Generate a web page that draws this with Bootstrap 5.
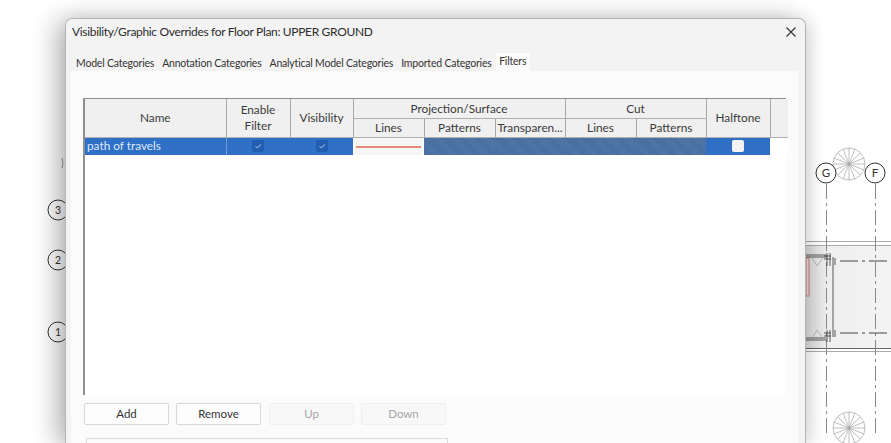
<!DOCTYPE html>
<html lang="en">
<head>
<meta charset="utf-8">
<title>Visibility/Graphic Overrides</title>
<link rel="stylesheet" href="https://cdn.jsdelivr.net/npm/bootstrap@5.3.0/dist/css/bootstrap.min.css">
<style>
html,body{height:443px;overflow:hidden;background:#fff}
body{font-family:"Lato","Noto Sans",sans-serif;font-size:12px;color:#333}
.sheet{position:absolute;left:0;top:0;width:891px;height:443px}
.vg-dialog{position:absolute;left:65px;top:18px;width:741px;height:425px;overflow:hidden;background:#f3f3f3;border:1px solid #b4b4b4;border-bottom:0;border-radius:7px 7px 0 0;padding:0 7px 0 5px}
.vg-shadow{position:absolute;left:65px;top:18px;width:741px;height:425px;border-radius:7px 7px 0 0;box-shadow:-8px 2px 26px rgba(0,0,0,.3),6px 2px 18px rgba(0,0,0,.08)}
.vg-title{height:26px;font-size:12px;letter-spacing:-.33px;color:#2c2c2c;padding-left:1px}
.vg-x{width:10px;height:10px;margin-right:2px}
.vg-tabs{height:18px;margin-top:8px;padding-left:1px}
.vg-tab{font-size:10.5px;letter-spacing:-.2px;padding:0 4px;line-height:20px;color:#333;white-space:nowrap}
.vg-tab.on{background:#fbfbfb;line-height:16px;height:18px;padding:0 3.5px}
.vg-panel{background:#fbfbfb;padding:27px 12px 0 12px;height:400px}
.vg-grid{height:297px;background:#fff;border-left:2px solid #8e8e8e;border-top:1px solid #8e8e8e}
.vg-table{table-layout:fixed;width:703px;border-collapse:collapse;font-size:11.8px;color:#3a3a3a;margin:0}
.vg-table th{background:#f0f0f0;font-weight:400;text-align:center;vertical-align:middle;padding:1px 0 0;border-right:1px solid #a8a8a8;border-bottom:1px solid #b0b0b0;line-height:16px}
.vg-table th.blank{border-right:0}
.row-top{height:19px}.row-sub{height:19px}
.vg-table td{height:18px;padding:0;background:#2f6fc6;color:#dfe9f8;border:0;vertical-align:middle;line-height:16px}
.vg-table td.nm{padding-left:2px;border-right:1px solid #6f9bd8}
.vg-table td.shade{background:repeating-linear-gradient(45deg,#446d9f 0 1px,#4f78a9 1px 2px)}
.vg-table td.none{background:#fff}
.vg-table td.ctr{text-align:center}
.ck{display:inline-block;width:12px;height:12px;border-radius:2px;background:#225eaf;vertical-align:-2px}
.ck svg{display:block}
.ck.off{background:#f2f2f2}
.vg-line{display:block;height:17px;background:#f6f6f6;margin:0 1px;padding-top:8px}
.vg-line i{display:block;height:2px;background:#e58a75;margin:0 2px}
.vg-btns{margin-top:8px;margin-left:1px}
.vg-btn{height:22px;width:85px;padding:0;background:#fdfdfd;border:1px solid #d8d8d8;border-radius:2px;color:#333;--bs-btn-font-size:11.5px;font-size:11.5px}
.vg-btn.off{background:#f8f8f8;border-color:#efefef;color:#a6a6a6}
.ml1{margin-left:7px}.ml2{margin-left:8px}
.vg-box{margin-top:13px;width:362px;height:30px;margin-left:3px;border:1px solid #dcdcdc;background:#fbfbfb}
</style>
</head>
<body>
<svg class="sheet" viewBox="0 0 891 443" fill="none" stroke="#555" stroke-width="1">
  <defs><linearGradient id="bandfill" x1="0" x2="1" y1="0" y2="0"><stop offset="0" stop-color="#d8d8d8"/><stop offset=".35" stop-color="#efefef"/><stop offset="1" stop-color="#f4f4f4"/></linearGradient></defs>
  <rect x="800" y="245" width="91" height="103" fill="url(#bandfill)" stroke="none"/>
  <path d="M800 241.5H891M800 245.5H891M800 351.5H891" stroke="#aaa"/>
  <path d="M800 348.5H891" stroke="#666"/>
  <path d="M826.5 184V433M875.5 184V433" stroke="#888" stroke-dasharray="15 4 3 4"/>
  <path d="M840 261H891M840 333H891" stroke="#444" stroke-dasharray="18 4 3 4"/>
  <g stroke="#a5a5a5" stroke-width=".7"><circle cx="849" cy="164" r="16" fill="#fff"/><path d="M849 148V180M833 164H865M838 153L860 175M838 175L860 153M843 149L855 179M843 179L855 149M834 158L864 170M834 170L864 158"/></g>
  <circle cx="826" cy="173" r="10" fill="#fff" stroke="#333"/>
  <circle cx="875" cy="173" r="10" fill="#fff" stroke="#333"/>
  <g stroke="#a5a5a5" stroke-width=".7"><circle cx="849" cy="428" r="16" fill="#fff"/><path d="M849 412V444M833 428H865M838 417L860 439M838 439L860 417M843 413L855 443M843 443L855 413M834 422L864 434M834 434L864 422"/></g>
  <rect x="806" y="258" width="3" height="38" fill="#f0d8d8" stroke="#c98080"/>
  <path d="M806 255H826M806 257H826M806 338H826M806 340H826M833 257V337M824 256H831M824 259H831M824 333H831M824 336H831M827 253V266M830 253V266M827 330V342M830 330V342M835 258V265M835 330V337" stroke="#333" stroke-width=".8"/>
  <path d="M812 258l5 8 6-8M812 338l5-8 6 8" stroke="#aaa" stroke-width=".8"/>
  <text x="826" y="177" font-family="Lato" font-size="11.5" fill="#333" stroke="none" text-anchor="middle">G</text>
  <text x="875" y="177" font-family="Lato" font-size="11.5" fill="#333" stroke="none" text-anchor="middle">F</text>
  <path d="M62 158q2 5 0 10" stroke="#999"/>
  <g stroke="#333"><circle cx="58" cy="210" r="10" fill="#fff"/><circle cx="58" cy="260" r="10" fill="#fff"/><circle cx="58" cy="332" r="10" fill="#fff"/></g>
  <g font-family="Lato" font-size="10.5" fill="#333" stroke="none" text-anchor="middle"><text x="58" y="214">3</text><text x="58" y="264">2</text><text x="58" y="336">1</text></g>
</svg>
<div class="vg-shadow"></div>
<div class="vg-dialog">
  <div class="vg-title d-flex align-items-center justify-content-between">
    <span>Visibility/Graphic Overrides for Floor Plan: UPPER GROUND</span>
    <svg class="vg-x" viewBox="0 0 10 10" stroke="#333" stroke-width="1.1"><path d="M.5.5l9 9M9.5.5l-9 9"/></svg>
  </div>
  <div class="vg-tabs d-flex">
    <span class="vg-tab">Model Categories</span>
    <span class="vg-tab">Annotation Categories</span>
    <span class="vg-tab">Analytical Model Categories</span>
    <span class="vg-tab">Imported Categories</span>
    <span class="vg-tab on">Filters</span>
  </div>
  <div class="vg-panel">
    <div class="vg-grid">
      <table class="vg-table">
        <colgroup><col style="width:141px"><col style="width:64px"><col style="width:63px"><col style="width:71px"><col style="width:71px"><col style="width:70px"><col style="width:71px"><col style="width:70px"><col style="width:64px"><col style="width:18px"></colgroup>
        <thead>
          <tr class="row-top"><th rowspan="2">Name</th><th rowspan="2">Enable<br>Filter</th><th rowspan="2">Visibility</th><th colspan="3">Projection/Surface</th><th colspan="2">Cut</th><th rowspan="2">Halftone</th><th rowspan="2" class="blank"></th></tr>
          <tr class="row-sub"><th>Lines</th><th>Patterns</th><th>Transparen...</th><th>Lines</th><th>Patterns</th></tr>
        </thead>
        <tbody>
          <tr>
            <td class="nm">path of travels</td>
            <td class="ctr"><span class="ck"><svg viewBox="0 0 12 12" fill="none" stroke="#b9cdea" stroke-width="1"><path d="M3.5 6.2l1.8 1.8 3.4-3.6"/></svg></span></td>
            <td class="ctr"><span class="ck"><svg viewBox="0 0 12 12" fill="none" stroke="#b9cdea" stroke-width="1"><path d="M3.5 6.2l1.8 1.8 3.4-3.6"/></svg></span></td>
            <td class="none"><span class="vg-line"><i></i></span></td>
            <td class="shade"></td><td class="shade"></td><td class="shade"></td><td class="shade"></td>
            <td class="ctr"><span class="ck off"></span></td>
            <td class="none"></td>
          </tr>
        </tbody>
      </table>
    </div>
    <div class="vg-btns d-flex">
      <button class="btn vg-btn" type="button">Add</button>
      <button class="btn vg-btn ml1" type="button">Remove</button>
      <button class="btn vg-btn off ml2" type="button">Up</button>
      <button class="btn vg-btn off ml1" type="button">Down</button>
    </div>
    <div class="vg-box"></div>
  </div>
</div>
<script src="https://cdn.jsdelivr.net/npm/bootstrap@5.3.0/dist/js/bootstrap.bundle.min.js"></script>
</body>
</html>
